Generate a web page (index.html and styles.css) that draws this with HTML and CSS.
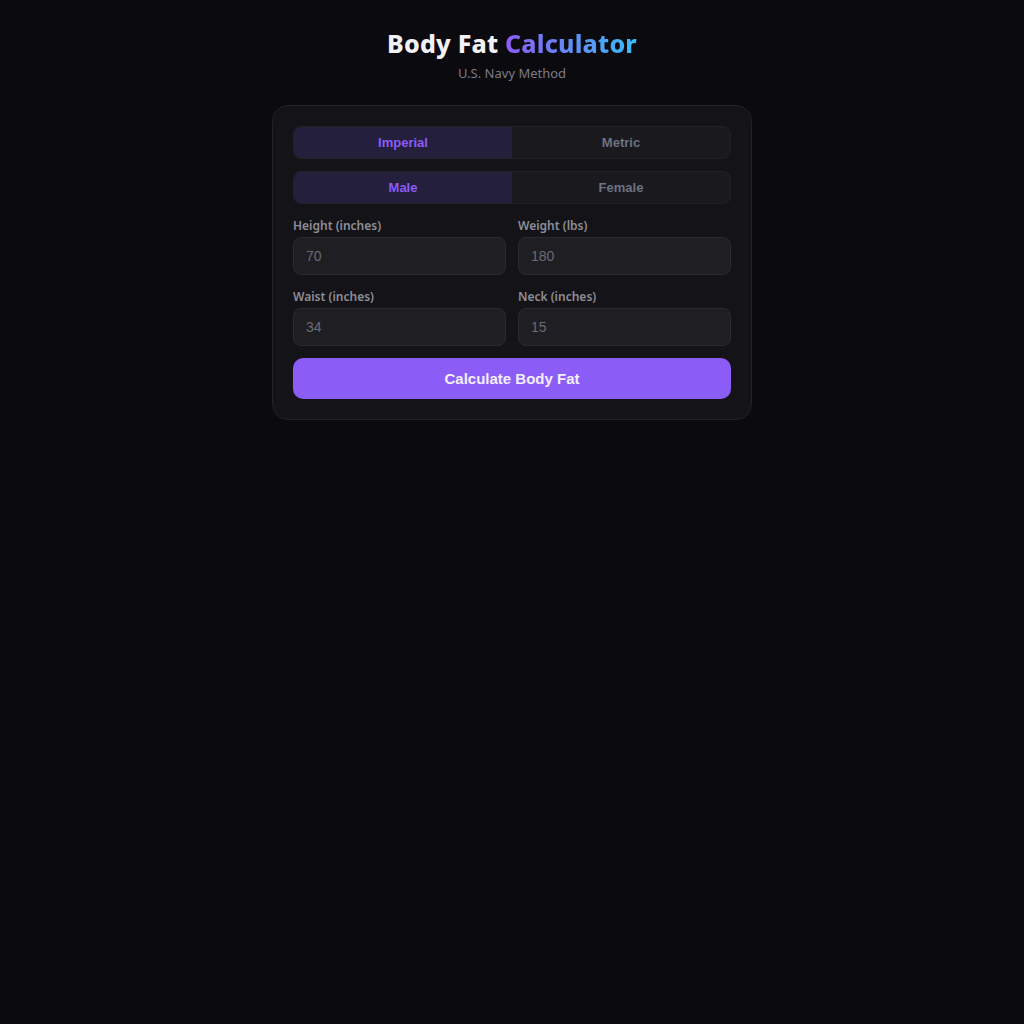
FILE: index.html
```html
<!DOCTYPE html>
<html lang="en">
<head>
<meta charset="utf-8">
<title>Body Fat Calculator</title>
<link rel="stylesheet" href="styles.css">
</head>
<body>
<main class="page">
  <header class="header">
    <h1 class="title">Body Fat <span class="accent">Calculator</span></h1>
    <p class="subtitle">U.S. Navy Method</p>
  </header>
  <section class="card">
    <div class="toggle">
      <button class="seg active">Imperial</button>
      <button class="seg">Metric</button>
    </div>
    <div class="toggle">
      <button class="seg active">Male</button>
      <button class="seg">Female</button>
    </div>
    <div class="grid">
      <label class="field"><span class="label">Height (inches)</span><input class="input" placeholder="70"></label>
      <label class="field"><span class="label">Weight (lbs)</span><input class="input" placeholder="180"></label>
      <label class="field"><span class="label">Waist (inches)</span><input class="input" placeholder="34"></label>
      <label class="field"><span class="label">Neck (inches)</span><input class="input" placeholder="15"></label>
    </div>
    <button class="calc">Calculate Body Fat</button>
  </section>
</main>
</body>
</html>
```
FILE: styles.css
```css
* { box-sizing: border-box; }
html, body { margin: 0; padding: 0; }
body {
  background: #0b0a0f;
  min-height: 1024px;
  font-family: "Noto Sans", sans-serif;
}
.page {
  display: flex;
  flex-direction: column;
  align-items: center;
  padding-top: 27px;
}
.header { text-align: center; }
.title {
  margin: 0;
  font-size: 25px;
  font-weight: 800;
  line-height: 32px;
  letter-spacing: 0.2px;
  color: #f1f1f6;
}
.accent {
  background: linear-gradient(90deg, #8b5cf6 0%, #38bdf8 100%);
  -webkit-background-clip: text;
  background-clip: text;
  color: transparent;
}
.subtitle {
  margin: 5px 0 0;
  font-size: 13px;
  line-height: 18px;
  color: #7c7c86;
}
.card {
  margin-top: 23px;
  width: 480px;
  background: #141317;
  border: 1px solid #222126;
  border-radius: 16px;
  padding: 20px;
  display: flex;
  flex-direction: column;
}
.toggle {
  display: flex;
  height: 33px;
  border: 1px solid #222127;
  border-radius: 8px;
  background: #1a191e;
  overflow: hidden;
  margin-bottom: 12px;
}
.seg {
  flex: 1;
  border: 0;
  background: transparent;
  font-family: "Liberation Sans", Arial, sans-serif;
  font-weight: 700;
  font-size: 13px;
  color: #6b7280;
  padding: 0;
}
.seg.active {
  background: #241f3c;
  color: #8b5cf6;
}
.grid {
  display: grid;
  grid-template-columns: 1fr 1fr;
  column-gap: 12px;
  row-gap: 14px;
  margin-top: 2px;
}
.field {
  display: flex;
  flex-direction: column;
}
.label {
  font-size: 12px;
  font-weight: 600;
  line-height: 16px;
  color: #8e8e98;
  margin-bottom: 3px;
}
.input {
  height: 38px;
  background: #1f1e23;
  border: 1px solid #2b2a30;
  border-radius: 8px;
  padding: 0 12px;
  font-family: "Liberation Sans", Arial, sans-serif;
  font-size: 14px;
  color: #d0d0d6;
  outline: none;
}
.input::placeholder { color: #6b6b74; }
.calc {
  margin-top: 12px;
  height: 41px;
  border: 0;
  border-radius: 10px;
  background: #8b5cf6;
  color: #f3f0ff;
  font-family: "Liberation Sans", Arial, sans-serif;
  font-weight: 700;
  font-size: 15px;
}
```
